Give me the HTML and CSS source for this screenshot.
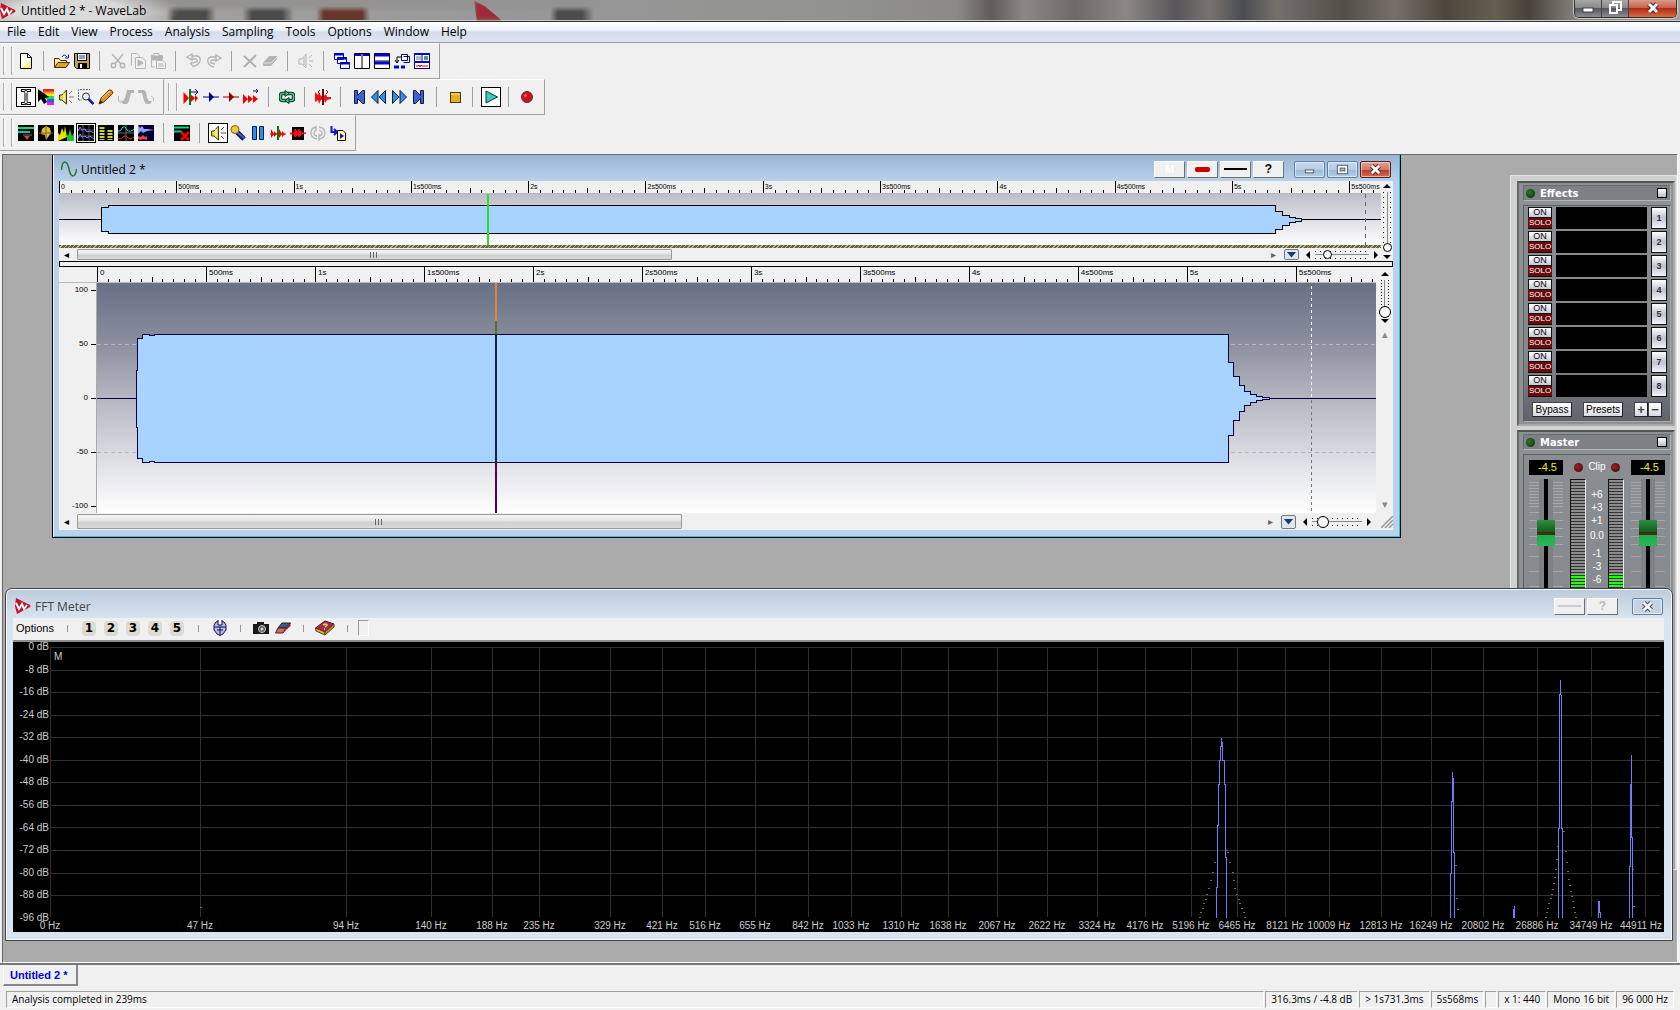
FILE: index.html
```html
<!DOCTYPE html>
<html lang="en">
<head>
    <meta charset="UTF-8">
    <meta name="viewport" content="width=device-width, initial-scale=1.0">
    <title>Untitled 2 * - WaveLab</title>
    <link rel="stylesheet" href="styles.css">
</head>
<body>
    <header class="titlebar">
        <svg class="logo" viewBox="0 0 16 16"><path d="M1 0 L15 7 Q16 8 15 9 L2 16 L0 8 Z" fill="#c4122a"/><path d="M1 5 L4 11 L7 6 L9 11 L12 7" fill="none" stroke="#fff" stroke-width="2"/></svg>
        <h1>Untitled 2 * - WaveLab</h1>
        <div class="controls">
            <button aria-label="Minimize"><svg viewBox="0 0 16 16"><rect x="3" y="8" width="10" height="4" fill="#fff" stroke="#444"/></svg></button>
            <button aria-label="Restore"><svg viewBox="0 0 16 16"><path d="M6 5 V2 H14 V10 H11" fill="none" stroke="#fff" stroke-width="2"/><rect x="3" y="5" width="7" height="8" fill="none" stroke="#fff" stroke-width="2"/></svg></button>
            <button class="close" aria-label="Close"><svg viewBox="0 0 16 16"><path d="M4 4 L12 12 M12 4 L4 12" stroke="#5a2020" stroke-width="5"/><path d="M4 4 L12 12 M12 4 L4 12" stroke="#fff" stroke-width="3"/></svg></button>
        </div>
    </header>

    <nav class="menu">
        <a href="#">File</a>
        <a href="#">Edit</a>
        <a href="#">View</a>
        <a href="#">Process</a>
        <a href="#">Analysis</a>
        <a href="#">Sampling</a>
        <a href="#">Tools</a>
        <a href="#">Options</a>
        <a href="#">Window</a>
        <a href="#">Help</a>
    </nav>

    <!-- Toolbars -->
    <div class="toolrow">
        <div class="toolbar">
            <button class="tool" title="New"><svg viewBox="0 0 16 16"><path d="M2.500 .5 H9.500 L13.500 4.500 V15.500 H2.500 Z" fill="#fffff0" stroke="#000"/><path d="M9.500 .5 V4.500 H13.500" fill="none" stroke="#000"/><path d="M13 7 V15 H4 Z" fill="#f4f080"/></svg></button>
            <i class="sep"></i>
            <button class="tool" title="Open"><svg viewBox="0 0 16 16"><path d="M.5 14.500 V5.500 H5 L6.500 7.500 H12.500 V9" fill="#ffe9a0" stroke="#4a3000"/><path d="M.5 14.500 L4 9.500 H15.500 L12 14.500 Z" fill="#e0a030" stroke="#4a3000"/><path d="M8 4 Q10 0 13 4 M14.500 1.500 V5 H11" fill="none" stroke="#1010c0"/></svg></button>
            <button class="tool" title="Save"><svg viewBox="0 0 16 16"><path d="M.5 .5 H15.500 V15.500 H2.500 L.5 13.500 Z" fill="#c8a050" stroke="#000"/><rect x="3.500" y=".5" width="9" height="7" fill="#fff" stroke="#000"/><path d="M5 3 H11 M5 5 H11" stroke="#2030c0"/><rect x="4" y="10" width="9" height="6"/><rect x="6" y="11" width="2" height="4" fill="#fff"/></svg></button>
            <i class="sep"></i>
            <button class="tool" title="Cut" disabled><svg viewBox="0 0 16 16" fill="none" stroke="#b4b4b4" stroke-width="1.500"><path d="M2 1 L11 11 M13 1 L5 11"/><circle cx="3.500" cy="12.500" r="2.200"/><circle cx="12.500" cy="12.500" r="2.200"/></svg></button>
            <button class="tool" title="Copy" disabled><svg viewBox="0 0 16 16" fill="none" stroke="#b4b4b4"><path d="M1.500 12.500 V.5 H7 L9.500 3 V4"/><path d="M5.500 4.500 H12 L15.500 7.500 V15.500 H5.500 Z"/><path d="M8 7 L13 10 L8 13 Z" fill="#b4b4b4"/></svg></button>
            <button class="tool" title="Paste" disabled><svg viewBox="0 0 16 16" fill="none" stroke="#b4b4b4"><path d="M5 14 H1.500 V2.500 H4 V.5 H9 V2.500 H12.500 V6" /><rect x="2" y="3" width="10" height="4" fill="#b4b4b4"/><path d="M6.500 7.500 H13 L15.500 10 V15.500 H6.500 Z M8 11 H13 M8 13 H14"/></svg></button>
            <i class="sep"></i>
            <button class="tool" title="Undo" disabled><svg viewBox="0 0 16 16" fill="none" stroke="#b4b4b4" stroke-width="1.300"><path d="M1 4 L6 1 V7 Z M6 3 H11 Q15 4 14 8 Q13 12 8 13 M6 6 H10 Q12 7 11 9 L5 10 M4 10 L8 14"/></svg></button>
            <button class="tool" title="Redo" disabled><svg viewBox="0 0 16 16" fill="none" stroke="#b4b4b4" stroke-width="1.300"><path d="M15 5 L10 2 V8 Z M10 4 H5 Q1 5 2 9 Q3 13 8 14 M10 7 H6 Q4 8 5 10 L9 11"/></svg></button>
            <i class="sep"></i>
            <button class="tool" title="Delete" disabled><svg viewBox="0 0 16 16"><path d="M2 3 L14 14 M14 2 L2 14" stroke="#b0b0b0" stroke-width="2"/></svg></button>
            <button class="tool" title="Erase" disabled><svg viewBox="0 0 16 16"><path d="M7 3 H15 V6 L9 13 H1 V10 Z" fill="#b4b4b4"/><path d="M1 10 H9 L15 4" fill="none" stroke="#ddd"/></svg></button>
            <i class="sep"></i>
            <button class="tool" title="Monitor" disabled><svg viewBox="0 0 16 16" fill="none" stroke="#b4b4b4"><path d="M1 6 H4 L8 1 V15 L4 11 H1 Z M6 4 V12 M11 5 L14 2 M11 8 H15 M11 11 L14 14"/></svg></button>
            <i class="sep"></i>
            <button class="tool" title="Cascade"><svg viewBox="0 0 16 16" fill="#fff" stroke="#000080"><path d="M.5 .5 h9 v6 h-9 Z M3.500 4.500 h9 v6 h-9 Z M6.500 9.500 h9 v6 h-9 Z"/><path d="M0 1.500 h10 M3 5.500 h10 M6 10.500 h10" stroke="#0000e0" stroke-width="2"/></svg></button>
            <button class="tool" title="Tile vertically"><svg viewBox="0 0 16 16"><path d="M.5 .5 h15 v15 h-15 Z M8 0 V16" fill="#fff" stroke="#000"/><path d="M1 2 h6 M9 2 h6" stroke="#0000e0" stroke-width="2"/></svg></button>
            <button class="tool" title="Tile horizontally"><svg viewBox="0 0 16 16"><path d="M.5 .5 h15 v15 h-15 Z M0 8 H16" fill="#fff" stroke="#000"/><path d="M1 2 h14 M1 10 h14" stroke="#0000e0" stroke-width="3"/></svg></button>
            <button class="tool" title="Arrange"><svg viewBox="0 0 16 16"><path d="M7.500 1.500 h6 v6 h-6 Z M9.500 3.500 h6 v6 h-6" fill="#fff" stroke="#000080"/><path d="M7 4 H3 V9 M1 7 L3 10 L5 7" fill="none" stroke="#000"/><path d="M0 14 h5 M7 14 h4" stroke="#0000e0" stroke-width="3"/></svg></button>
            <button class="tool" title="Layout"><svg viewBox="0 0 16 16"><rect x=".5" y=".5" width="15" height="15" fill="#fff" stroke="#000080"/><path d="M0 1 h16 M0 9 h16" stroke="#0000e0" stroke-width="2"/><path d="M8 1 V8" stroke="#000080"/><path d="M2 4 h5 M2 6 h5" stroke="#777"/><rect x="10" y="3" width="4" height="4" fill="#4a9a9a"/><path d="M2 13 h2 l1 -1 l1 2 l1 -2 l1 1 h6" fill="none" stroke="#e00"/></svg></button>
        </div>
    </div>
    <div class="toolrow">
        <div class="toolbar">
            <button class="tool on" title="Time selection"><svg viewBox="0 0 16 16"><path d="M3 1.500 H6 Q8 1.500 8 4 Q8 1.500 10 1.500 H13 M3 14.500 H6 Q8 14.500 8 12 Q8 14.500 10 14.500 H13 M8 3 V13" fill="none" stroke="#000" stroke-width="3"/><path d="M4 1.500 H6 Q8 1.500 8 4 Q8 1.500 10 1.500 H12 M4 14.500 H6 Q8 14.500 8 12 Q8 14.500 10 14.500 H12 M8 3 V13" fill="none" stroke="#fff"/></svg></button>
            <button class="tool" title="Spectrum edit"><svg viewBox="0 0 16 16"><path d="M5 1.500 H16" stroke="#f02020" stroke-width="3"/><path d="M5 4 H16" stroke="#f09020" stroke-width="3"/><path d="M6 6 H16" stroke="#f0f020" stroke-width="3"/><path d="M8 8.500 H16" stroke="#20e040" stroke-width="3"/><path d="M9 11.500 H16" stroke="#2060f0" stroke-width="3"/><path d="M9 14.500 H16" stroke="#e020e0" stroke-width="3"/><path d="M0 0 V13 L3 10 L6 15 L9 13 L7 9 L11 8 Z"/></svg></button>
            <button class="tool" title="Play tool"><svg viewBox="0 0 16 16"><path d="M1.500 6 H4 L8.500 1 V15 L4 11 H1.500 Z" fill="#e0d840" stroke="#403800"/><path d="M6 4 V12" stroke="#fff"/><path d="M11 5 L14 2 M11 8 H16 M11 11 L14 14" stroke="#777"/></svg></button>
            <button class="tool" title="Zoom"><svg viewBox="0 0 16 16"><path d="M.5 11 V.5 H12" fill="none" stroke="#666" stroke-dasharray="2 1"/><path d="M.5 11 H4" stroke="#666" stroke-dasharray="2 1"/><circle cx="8" cy="7.500" r="3.500" fill="#e8eef8" stroke="#333"/><path d="M10.500 10 L15.500 15" stroke="#1018c0" stroke-width="2.500"/></svg></button>
            <button class="tool" title="Pencil"><svg viewBox="0 0 16 16"><path d="M1 15 L3 9 L11 1 Q14 0 15 4 L6 13 Z" fill="#e09030" stroke="#6a3800"/><path d="M1 15 L2.500 11 L5 13.500 Z" fill="#402000"/><path d="M4 9 L12 2" stroke="#ffd890"/></svg></button>
            <button class="tool" title="Fade in" disabled><svg viewBox="0 0 16 16"><path d="M2 11 L5 12 L7 9 L9 1 H16 V4 H13 L11 12 L9 15 H5 Z" fill="#b4b4b4"/><path d="M0.500 7 V12 L3 14" fill="none" stroke="#b4b4b4"/></svg></button>
            <button class="tool" title="Fade out" disabled><svg viewBox="0 0 16 16"><path d="M0 1 H6 L8 3 L9 9 L11 12 H14 L12 15 H8 L6 12 L4 4 H0 Z" fill="#b4b4b4"/><path d="M13 7 L15.500 9 V12" fill="none" stroke="#b4b4b4"/></svg></button>
        </div>
        <div class="toolbar">
            <button class="tool" title="Go to cursor"><svg viewBox="0 0 16 16"><path d="M.5 3 V15 L6 9 Z M7 5 V14 L12 9 Z M12 6 V13 L15 9 Z" fill="#f00000"/><path d="M7 0 V16" stroke="#008000" stroke-width="2"/><path d="M8 3 H15 M12 0 L15 3 L12 6" fill="none" stroke="#000090"/></svg></button>
            <button class="tool" title="Marker"><svg viewBox="0 0 16 16"><path d="M0 8 H16" stroke="#000090"/><path d="M6 3 V13 L11 8 Z" fill="#000090"/></svg></button>
            <button class="tool" title="Region marker"><svg viewBox="0 0 16 16"><path d="M0 8 H16" stroke="#900000"/><path d="M6 3 V13 L11 8 Z" fill="#900000"/></svg></button>
            <button class="tool" title="Play all"><svg viewBox="0 0 16 16"><path d="M0 5 V15 L5 10 Z M5 6 V14 L10 10 Z M10 6 V14 L15 10 Z" fill="#f00000"/><path d="M10 2 H15 M13 0 L15 2 L13 4" fill="none" stroke="#000090"/></svg></button>
            <i class="sep"></i>
            <button class="tool" title="Loop"><svg viewBox="0 0 16 16"><rect x="1.500" y="4.500" width="13" height="7" rx="2" fill="none" stroke="#003820" stroke-width="3.500"/><rect x="1.500" y="4.500" width="13" height="7" rx="2" fill="none" stroke="#50c890" stroke-width="1.500"/><path d="M6 1.500 L10 4.500 L6 7.500 Z M10 8.500 L6 11.500 L10 14.500 Z" fill="#50c890" stroke="#003820"/></svg></button>
            <i class="sep"></i>
            <button class="tool" title="Split"><svg viewBox="0 0 16 16"><path d="M0 3 L3 6 L4 3 L6 7 H9 L11 5 L12 8 H16 V10 L12 11 L10 14 L9 10 L6 11 L4 15 L3 11 L0 13 Z" fill="#f01010"/><path d="M8 0 V16" stroke="#800000" stroke-width="2"/><path d="M5 1 L3 3 L5 5 M11 1 L13 3 L11 5" stroke="#333" fill="none"/></svg></button>
            <i class="sep"></i>
            <button class="tool" title="Start"><svg viewBox="0 0 16 16"><path d="M3.500 1.500 H6.500 V6.500 L11.500 1.500 H13.500 V14.500 H11.500 L6.500 9.500 V14.500 H3.500 Z" fill="#3a62d0" stroke="#0a1a50"/></svg></button>
            <button class="tool" title="Rewind"><svg viewBox="0 0 16 16"><path d="M.5 8 L7 1.500 V14.500 Z M8 8 L14.500 1.500 V14.500 Z" fill="#3090e0" stroke="#0a1a50"/></svg></button>
            <button class="tool" title="Forward"><svg viewBox="0 0 16 16"><path d="M1.500 1.500 L8 8 L1.500 14.500 Z M9 1.500 L15.500 8 L9 14.500 Z" fill="#3090e0" stroke="#0a1a50"/></svg></button>
            <button class="tool" title="End"><svg viewBox="0 0 16 16"><path d="M12.500 1.500 H9.500 V6.500 L4.500 1.500 H2.500 V14.500 H4.500 L9.500 9.500 V14.500 H12.500 Z" fill="#3a62d0" stroke="#0a1a50"/></svg></button>
            <i class="sep"></i>
            <button class="tool" title="Stop"><svg viewBox="0 0 16 16"><rect x="3.500" y="3.500" width="10" height="10" fill="#e0b020" stroke="#4a3800"/><path d="M4 5 H13" stroke="#ffe880"/></svg></button>
            <i class="sep"></i>
            <button class="tool on" title="Play"><svg viewBox="0 0 16 16"><path d="M3 2 L14.500 8 L3 14 Z" fill="#40c8b0" stroke="#003838"/></svg></button>
            <i class="sep"></i>
            <button class="tool" title="Record"><svg viewBox="0 0 16 16"><circle cx="8" cy="8" r="5.500" fill="#d01020" stroke="#603030"/><circle cx="6.500" cy="6.500" r="1.500" fill="#f06060"/></svg></button>
        </div>
    </div>
    <div class="toolrow">
        <div class="toolbar">
            <button class="tool" title="Level meter"><svg viewBox="0 0 16 16"><rect width="16" height="16"/><path d="M0 3 H16" stroke="#00e070" stroke-width="2"/><path d="M0 7 H12" stroke="#00c0c0" stroke-width="2"/><path d="M5 10 H14" stroke="#777"/><path d="M6 11 H12 L9 15 Z" fill="#e04030"/></svg></button>
            <button class="tool" title="Phase scope"><svg viewBox="0 0 16 16"><rect width="16" height="16"/><path d="M4 4 L8 1 L12 3 L13 8 L8 15 L7 10 L3 9 Z" fill="#d8c040"/><path d="M1 8 H15 M8 1 V14" stroke="#806020"/></svg></button>
            <button class="tool" title="Spectrum"><svg viewBox="0 0 16 16"><rect width="16" height="16"/><path d="M0 16 V8 L2 10 L4 3 L6 8 L7 1 L9 12 Z" fill="#e8e000"/><path d="M9 16 V9 L10 11 L12 4 L14 11 L16 8 V16 Z" fill="#20c030"/></svg></button>
            <button class="tool on" title="FFT meter"><svg viewBox="0 0 16 16"><rect width="16" height="16"/><path d="M0 5 H16 M0 11 H16 M5 0 V16 M11 0 V16" stroke="#555"/><path d="M0 6 L2 2 L4 5 L7 4 L9 7 L12 6 L16 8 M0 13 L2 9 L4 12 L7 11 L9 13 L12 11 L16 14" fill="none" stroke="#8080ff"/></svg></button>
            <button class="tool" title="Bit meter"><svg viewBox="0 0 16 16"><rect width="16" height="16"/><path d="M4 2 V15" stroke="#d0d030" stroke-width="5" stroke-dasharray="2 1"/><path d="M12 5 V15" stroke="#d0d030" stroke-width="5" stroke-dasharray="2 1"/></svg></button>
            <button class="tool" title="Oscilloscope"><svg viewBox="0 0 16 16"><rect width="16" height="16"/><path d="M0 8 H16 M8 0 V16" stroke="#666"/><path d="M0 6 Q3 7 4 3 Q7 0 9 5 Q12 8 16 4" fill="none" stroke="#20e0e0"/><path d="M0 14 Q4 15 6 11 Q8 10 10 13 Q13 15 16 12" fill="none" stroke="#f02020"/></svg></button>
            <button class="tool" title="Wave scope"><svg viewBox="0 0 16 16"><rect width="16" height="16" fill="#000030"/><path d="M0 0 L2 3 L4 1 L6 4 L10 4 L16 5 L9 6 L5 8 L3 6 L0 9 Z" fill="#90a0ff"/><path d="M0 11 L3 12 L5 10 L7 12 L9 11 V15 L5 14 L3 15 L0 14 Z" fill="#f04040"/></svg></button>
            <i class="sep"></i>
            <button class="tool" title="Close meters"><svg viewBox="0 0 16 16"><rect width="16" height="16"/><path d="M0 2.500 H15" stroke="#00e070" stroke-width="2"/><path d="M0 6.500 H8" stroke="#00c0c0" stroke-width="2"/><path d="M7 7 L15 15 M15 7 L7 15" stroke="#f00000" stroke-width="3"/></svg></button>
            <i class="sep"></i>
            <button class="tool on" title="Monitor playback"><svg viewBox="0 0 16 16"><path d="M1.500 6 H4 L8.500 1 V15 L4 11 H1.500 Z" fill="#e0d840" stroke="#403800"/><path d="M6 4 V12" stroke="#fff"/><path d="M11 5 L14 2 M11 8 H16 M11 11 L14 14" stroke="#555"/></svg></button>
            <button class="tool" title="Monitor input"><svg viewBox="0 0 16 16"><path d="M7 7 L14 14" stroke="#101850" stroke-width="5"/><path d="M7 7 L14 13" stroke="#4060d0" stroke-width="2"/><circle cx="5" cy="4.500" r="4" fill="#f0c840" stroke="#806010"/></svg></button>
            <button class="tool" title="Pause"><svg viewBox="0 0 16 16"><path d="M2.500 1.500 h4 v13 h-4 Z M9.500 1.500 h4 v13 h-4 Z" fill="#3090e0" stroke="#0a1a50"/></svg></button>
            <button class="tool" title="Monitor cursor"><svg viewBox="0 0 16 16"><path d="M1 4 V13 L4 9 Z M4 6 V12 L7 9 Z M9 4 V13 L12 9 Z M12 6 V12 L15 9 Z" fill="#f00000"/><path d="M0 9 H16" stroke="#f00000"/><path d="M8 1 V15" stroke="#008000" stroke-width="2"/></svg></button>
            <button class="tool" title="Analyze selection"><svg viewBox="0 0 16 16"><rect x="2" y="2" width="12" height="13"/><path d="M0 8 L4 8 L5 4 L8 8 L9 4 L12 8 H16 L12 9 L9 12 L8 9 L5 12 L4 9 H0 Z" fill="#f01010" stroke="#f01010"/></svg></button>
            <button class="tool" title="Refresh" disabled><svg viewBox="0 0 16 16" fill="none" stroke="#b4b4b4" stroke-width="1.300"><path d="M6 2 Q1 3 1 8 Q1 13 7 14 M6 5 Q4 6 4 8 Q4 11 7 11 M9 2 Q15 3 15 8 Q15 13 9 14 M9 5 Q12 6 12 8 Q12 11 9 11 M6 1 V6 M9 9 V16"/></svg></button>
            <button class="tool" title="Export"><svg viewBox="0 0 16 16"><path d="M1.500 1 V7 H6 M4 4 L7 7 L4 10" fill="none" stroke="#1010e0" stroke-width="2"/><path d="M7.500 5.500 H13 L15.500 8 V15.500 H7.500 Z" fill="#fff8a0" stroke="#000"/><path d="M10 8 L14 11 L10 14 Z" fill="#1010e0"/></svg></button>
        </div>
    </div>

    <main class="workspace">
        <!-- Mixer column -->
        <aside class="mixer">
            <section class="unit">
                <h2><i class="led green"></i>Effects<button aria-label="Fold effects"></button></h2>
                <div class="unit-body">
                    <div id="slots"></div>
                    <div class="unit-buttons">
                        <button>Bypass</button>
                        <button>Presets</button>
                        <span><button>+</button><button>−</button></span>
                    </div>
                </div>
            </section>
            <section class="unit master">
                <h2><i class="led green"></i>Master<button aria-label="Fold master"></button></h2>
                <div class="unit-body master-body">
                    <div class="channel">
                        <output>-4.5</output>
                        <input class="fader" type="range" value="79" aria-label="Left level">
                    </div>
                    <div class="vu"><i class="led red"></i><div class="bar"></div></div>
                    <div class="scale">
                        <span>Clip</span>
                        <ul><li>+6</li><li>+3</li><li>+1</li><li class="zero">0.0</li><li>-1</li><li>-3</li><li>-6</li></ul>
                    </div>
                    <div class="vu"><i class="led red"></i><div class="bar"></div></div>
                    <div class="channel">
                        <output>-4.5</output>
                        <input class="fader" type="range" value="79" aria-label="Right level">
                    </div>
                </div>
            </section>
        </aside>

        <!-- Wave document -->
        <section class="window doc">
            <div class="window-title">
                <svg class="logo" viewBox="0 0 16 16"><path d="M.5 9 Q1 1 4 1 Q6.500 1 8 8 Q9.500 15 12 15 Q15 14 15.500 8" fill="none" stroke="#2a7a20" stroke-width="1.500"/></svg>
                <h2>Untitled 2 *</h2>
                <button class="flat" aria-label="Marker"><b class="ghost">M</b></button>
                <button class="flat" aria-label="Colour"><i class="pill"></i></button>
                <button class="flat" aria-label="Line"><i class="dash"></i></button>
                <button class="flat help">?</button>
                <button class="glass first" aria-label="Minimize"><svg viewBox="0 0 16 16"><rect x="3.500" y="8.500" width="9" height="3" fill="#fff" stroke="#555"/></svg></button>
                <button class="glass" aria-label="Maximize"><svg viewBox="0 0 16 16"><rect x="4" y="5" width="8" height="6" fill="none" stroke="#456" stroke-width="4"/><rect x="4" y="5" width="8" height="6" fill="none" stroke="#fff" stroke-width="2"/></svg></button>
                <button class="glass close" aria-label="Close"><svg viewBox="0 0 16 16"><path d="M4 4 L12 12 M12 4 L4 12" stroke="#5a2020" stroke-width="5"/><path d="M4 4 L12 12 M12 4 L4 12" stroke="#fff" stroke-width="3"/></svg></button>
            </div>
            <div class="overview">
                <div class="overview-main">
                    <div class="ruler small" id="ruler-top"></div>
                    <svg class="wave" viewBox="0 0 1322 51" preserveAspectRatio="none" shape-rendering="crispEdges">
                        <defs><linearGradient id="g1" x1="0" y1="0" x2="0" y2="1"><stop offset="0" stop-color="#bcbeca"/><stop offset="1" stop-color="#fff"/></linearGradient></defs>
                        <rect width="1322" height="51" fill="url(#g1)"/>
                        <path d="M0 25.500 H42.500 V13.500 H49 V11.500 H1216.500 V17 H1223 V21 H1230 V23 H1236 V24.500 H1242 V25.500 H1322 M1242 25.500 V27 H1236 V28.500 H1230 V31 H1223 V35 H1216.500 V39.500 H49 V37.500 H42.500 V25.500" fill="#a8d2ff" stroke="#000"/>
                        <path d="M1306.500 0 V51" stroke="#667" stroke-dasharray="4 4"/>
                        <path d="M429 0 V51" stroke="#30d830" stroke-width="2"/>
                    </svg>
                    <div class="hatch"></div>
                    <div class="hscroll thin">
                        <button class="arrow" aria-label="Scroll left">◂</button>
                        <div class="track"><div class="thumb"></div></div>
                        <button class="arrow gray" aria-label="Scroll right">▸</button>
                        <button class="drop" aria-label="Zoom menu"></button>
                        <div class="hzoom"><i class="left"></i><input type="range" value="18" aria-label="Overview zoom"><i class="right"></i></div>
                    </div>
                </div>
                <div class="vzoom"><i class="up"></i><input type="range" value="0" aria-label="Overview vertical zoom"><i class="down"></i></div>
            </div>
            <div class="splitter"></div>
            <div class="main-view">
                <div class="ruler-pad"></div>
                <div class="ruler" id="ruler-main"></div>
                <div class="side">
                    <div class="vzoom"><i class="up"></i><input type="range" value="0" aria-label="Vertical zoom"><i class="down"></i></div>
                    <div class="vscroll"><button aria-label="Scroll up">▴</button><button aria-label="Scroll down">▾</button></div>
                </div>
                <ul class="level-axis"><li>100</li><li>50</li><li>0</li><li>-50</li><li>-100</li></ul>
                <svg class="wave" viewBox="0 0 1279 230" preserveAspectRatio="none" shape-rendering="crispEdges">
                    <defs><linearGradient id="g2" x1="0" y1="0" x2="0" y2="1"><stop offset="0" stop-color="#687085"/><stop offset=".25" stop-color="#898d9d"/><stop offset=".5" stop-color="#b4b7c1"/><stop offset=".8" stop-color="#e2e3e9"/><stop offset="1" stop-color="#fff"/></linearGradient></defs>
                    <rect width="1279" height="230" fill="url(#g2)"/>
                    <path d="M0 61.500 H1279 M0 169.500 H1279" stroke="#b8b8b8" stroke-dasharray="4 3"/>
                    <path d="M0 115.500 H39.500 V87 H40.500 V55.500 H45.500 V51.500 H52 V52.500 H57 V51.500 H1131.500 V79 H1136.500 V93.500 H1142.500 V102.500 H1147.500 V108.500 H1153.500 V111.500 H1159.500 V113.500 H1165.500 V114.500 H1172 V115.500 H1279 M1172 115.500 V116.500 H1165.500 V117.500 H1159.500 V119.500 H1153.500 V122.500 H1147.500 V128.500 H1142.500 V137.500 H1136.500 V152 H1131.500 V179.500 H57 V178.500 H52 V179.500 H45.500 V175.500 H40.500 V144 H39.500 V115.500" fill="#a8d2ff" stroke="#000040"/>
                    <path d="M1214.500 3 V115" stroke="#fff" stroke-dasharray="3 3"/>
                    <path d="M1214.500 117 V230" stroke="#777" stroke-dasharray="3 3"/>
                    <path d="M399 0 V38" stroke="#d88a38" stroke-width="2"/>
                    <path d="M399 38 V51" stroke="#4a7828" stroke-width="2"/>
                    <path d="M399 51 V180" stroke="#12283c" stroke-width="2"/>
                    <path d="M399 180 V230" stroke="#4c0848" stroke-width="2"/>
                </svg>
            </div>
            <div class="hscroll">
                <button class="arrow" aria-label="Scroll left">◂</button>
                <div class="track"><div class="thumb"></div></div>
                <button class="arrow gray" aria-label="Scroll right">▸</button>
                <button class="drop" aria-label="Zoom menu"></button>
                <div class="hzoom"><i class="left"></i><input type="range" value="14" aria-label="Zoom"><i class="right"></i></div>
                <svg class="grip" viewBox="0 0 12 12"><path d="M0 12 L12 0 M4 12 L12 4 M8 12 L12 8" stroke="#999" stroke-width="1.500"/></svg>
            </div>
        </section>

        <!-- FFT meter -->
        <section class="window fft">
            <div class="window-title">
                <svg class="logo" viewBox="0 0 16 16"><path d="M1 0 L15 7 Q16 8 15 9 L2 16 L0 8 Z" fill="#c4122a"/><path d="M1 5 L4 11 L7 6 L9 11 L12 7" fill="none" stroke="#fff" stroke-width="2"/></svg>
                <h2>FFT Meter</h2>
                <button class="flat" aria-label="Line"><i class="dash"></i></button>
                <button class="flat help">?</button>
                <button class="glass first" aria-label="Close"><svg viewBox="0 0 16 16"><path d="M4 4 L12 12 M12 4 L4 12" stroke="#445" stroke-width="5"/><path d="M4 4 L12 12 M12 4 L4 12" stroke="#fff" stroke-width="3"/></svg></button>
            </div>
            <div class="fft-tools">
                <button class="options">Options</button>
                <i class="tick"></i>
                <button class="num">1</button><button class="num">2</button><button class="num">3</button><button class="num">4</button><button class="num">5</button>
                <i class="tick"></i>
                <button class="tool" title="Settings"><svg viewBox="0 0 16 16"><path d="M4 2 L2 5 V10 L5 14 L8 15.500 L11 14 L14 10 V5 L12 2 L8 .5 Z" fill="#b8b8f0" stroke="#101040"/><path d="M6 0 V5 H10 V0" fill="#f0f0f0" stroke="#101040"/><path d="M2 7 H14 M5 10 H11 M8 7 V15" stroke="#101040"/></svg></button>
                <i class="tick"></i>
                <button class="tool" title="Snapshot"><svg viewBox="0 0 16 16"><path d="M0 4 H4 V2 H11 V4 H16 V14 H0 Z" fill="#181818"/><circle cx="9" cy="9" r="3.500" fill="#555" stroke="#ccc"/><circle cx="9" cy="9" r="1.500" fill="#ddd"/></svg></button>
                <button class="tool" title="Erase snapshots"><svg viewBox="0 0 16 16"><path d="M7 3 H15.500 L11 8 H3 Z" fill="#3a5a90" stroke="#222"/><path d="M3 8 H11 L8 13 H.5 Z" fill="#d86868" stroke="#402020"/><path d="M11 8 L15.500 3 V6 L8 13 Z" fill="#803030"/></svg></button>
                <i class="tick"></i>
                <button class="tool wide" title="Help"><svg viewBox="0 0 20 16"><path d="M.5 8 L10 1 L19 4 L10 12 Z" fill="#a82850" stroke="#501028"/><path d="M.5 8 L10 12 V15 L1 11 Z" fill="#e0b040" stroke="#604010"/><path d="M10 12 L19 4 V7 L10 15 Z" fill="#c09030" stroke="#604010"/><path d="M8 5 Q11 3 12 5 L10 7 M9 9 h1" stroke="#f0e040" stroke-width="1.500" fill="none"/></svg></button>
                <i class="tick"></i>
                <i class="well"></i>
            </div>
            <div class="fft-plot">
                <svg id="spectrum" viewBox="0 0 1651 290" preserveAspectRatio="none" shape-rendering="crispEdges"></svg>
                <ul class="db-axis" id="db-axis"></ul>
                <span class="mode">M</span>
                <div class="hz-axis" id="hz-axis"></div>
            </div>
        </section>
    </main>

    <div class="tabs"><button>Untitled 2 *</button></div>

    <footer class="status">
        <span class="message">Analysis completed in 239ms</span>
        <span>316.3ms / -4.8 dB</span>
        <span>&gt; 1s731.3ms</span>
        <span>5s568ms</span>
        <span class="empty"></span>
        <span>x 1: 440</span>
        <span>Mono 16 bit</span>
        <span>96 000 Hz</span>
    </footer>

    <script src="app.js"></script>
</body>
</html>
```
FILE: styles.css
```css
* {
    box-sizing: border-box;
}

body {
    margin: 0;
    height: 100vh;
    display: flex;
    flex-direction: column;
    background: #f0f0f0;
    color: #000;
    font-family: "Liberation Sans", Arial, sans-serif;
    font-size: 11px;
    overflow: hidden;
}

button, input {
    margin: 0;
    padding: 0;
    border: none;
    background: none;
    font: inherit;
    color: inherit;
}

h1, h2, ul {
    margin: 0;
    padding: 0;
    list-style: none;
    font-weight: normal;
}

svg {
    display: block;
}

.logo {
    width: 16px;
    height: 16px;
}

/* Title bar */
.titlebar {
    flex: none;
    height: 22px;
    display: flex;
    align-items: center;
    gap: 5px;
    border-bottom: 1px solid #333;
    box-shadow: inset 0 -1px #c8c8c8;
    background:
        radial-gradient(ellipse 110px 26px at 70px 12px, rgba(225, 225, 225, 0.9) 50%, transparent),
        linear-gradient(#959391 6px, transparent 12px),
        linear-gradient(90deg, transparent 166px, #4c4d48 174px 206px, transparent 216px 242px, #4a4a4a 252px 282px, transparent 294px 316px, #66362a 324px 362px, transparent 370px 550px, #4c4c4c 558px 582px, transparent 594px),
        linear-gradient(90deg, #a8a6a2 0, #98989a 30%, #92928f 50%, #8a8987 57%, #605d58 59%, #8b8884 61%, #6e6a67 64%, #8a8784 67%, #58565a 70%, #77736f 72%, #4a4c50 74%, #74706c 76%, #544e48 80%, #77706a 83%, #4c463c 86%, #655f50 89%, #474139 91%, #8b8781 94%, #a5a19d 100%);
    background-size: auto, 600px 100%, 620px 100%, auto;
    background-repeat: no-repeat;
}

/* blurred red logo that shows through the glass */
.titlebar::after {
    content: "";
    order: 1;
    width: 28px;
    height: 20px;
    margin-right: auto;
    background: #9c2c3a;
    clip-path: polygon(0 0, 40% 30%, 100% 100%, 10% 100%);
    filter: blur(2px);
}

.titlebar h1 {
    width: 448px;
    font: 12px "Open Sans", sans-serif;
}

.controls {
    order: 2;
    display: flex;
    align-self: flex-start;
    height: 18px;
    margin-right: 3px;
    border: 1px solid #333;
    border-top: none;
    border-radius: 0 0 5px 5px;
    box-shadow: 0 0 0 1px rgba(255, 255, 255, 0.5);
    overflow: hidden;
}

.controls button {
    width: 27px;
    display: flex;
    justify-content: center;
    border-right: 1px solid #444;
    background: linear-gradient(#a8a8a8, #888 45%, #55585c 50%, #8a8c90);
}

.controls svg {
    width: 16px;
    height: 16px;
}

.controls .close {
    width: 47px;
    border: none;
    background: linear-gradient(#dc9a8c, #c8604c 45%, #b02c14 50%, #d86a40);
}

/* Menu */
.menu {
    flex: none;
    height: 21px;
    display: flex;
    align-items: center;
    padding: 0 1px 1px;
    border-bottom: 1px solid #9a9aa4;
    background: linear-gradient(#fff, #f0f3fa 40%, #d6dcee 50%, #e0e4f2);
    font: 12px "Open Sans", sans-serif;
}

.menu a {
    padding: 0 6px;
    color: #000;
    text-decoration: none;
}

/* Toolbars */
.toolrow {
    flex: none;
    display: flex;
    gap: 1px;
}

.toolbar {
    height: 36px;
    display: flex;
    align-items: center;
    padding-right: 7px;
    border-top: 1px solid #fff;
    border-right: 1px solid #a0a0a0;
    border-bottom: 1px solid #a0a0a0;
}

.toolbar::before {
    content: "";
    width: 7px;
    height: 28px;
    margin: 0 4px 0 3px;
    border: solid #a8a8a8;
    border-width: 0 1px;
    box-shadow: inset 1px 0 #fff, 1px 0 #fff;
}

.sep {
    width: 16px;
    height: 20px;
    background: linear-gradient(#a0a0a0, #a0a0a0) 7px 0 / 1px 100% no-repeat;
}

.tool {
    width: 20px;
    height: 20px;
    padding: 2px;
}

.tool.on {
    padding: 1px;
    border: 1px solid #000;
    background: #fff;
}

.tool svg {
    width: 16px;
    height: 16px;
}

.tool.wide {
    width: 23px;
    padding: 2px 1px;
}

.tool.wide svg {
    width: 20px;
}

/* MDI area */
.workspace {
    flex: 1;
    position: relative;
    margin: 3px 2px 0;
    border: 1px solid #696969;
    border-bottom-color: #fff;
    border-right-color: #fff;
    background: #ababab;
    overflow: hidden;
}

.window {
    position: absolute;
    display: flex;
    flex-direction: column;
}

.window-title {
    flex: none;
    display: flex;
    align-items: center;
    gap: 2px;
}

.window-title h2 {
    flex: 1;
    margin-left: 2px;
    font: 12px "Open Sans", sans-serif;
}

.flat {
    width: 31px;
    height: 17px;
    display: flex;
    align-items: center;
    justify-content: center;
    border: 1px solid;
    border-color: #fff #707070 #707070 #fff;
    background: #f0f0f0;
}

.ghost {
    color: #fff;
}

.pill {
    width: 15px;
    height: 5px;
    border-radius: 2px;
    background: #c80000;
}

.dash {
    width: 23px;
    height: 2px;
    background: #000;
}

.help {
    font-size: 12px;
    font-weight: bold;
}

.glass {
    width: 31px;
    height: 17px;
    display: flex;
    align-items: center;
    justify-content: center;
    border: 1px solid #5f7fa5;
    border-radius: 2px;
    box-shadow: inset 0 0 0 1px rgba(255, 255, 255, 0.5);
    background: linear-gradient(#c6daef, #b4cce6 50%, #9bb9d8 52%, #b4cfe8);
}

.glass.first {
    margin-left: 8px;
}

.glass svg {
    width: 15px;
    height: 15px;
}

.glass.close {
    border-color: #5a1c18;
    background: linear-gradient(#e0a090, #d07868 50%, #b83c28 52%, #d06c54);
}

/* Wave document */
.doc {
    top: 0;
    left: 49px;
    right: 276px;
    padding: 0 7px 7px 6px;
    border: 1px solid #000;
    border-top: none;
    box-shadow: inset 1px 0 #e8f4ff, inset -1px -1px #20c8e8;
    background: linear-gradient(#9ab5d4, #b9d1ea 26px);
}

.doc .window-title {
    height: 26px;
    padding: 2px 2px 0;
}

.overview, .hscroll, .main-view {
    background: #f0f0f0;
}

.overview {
    display: flex;
}

.overview-main {
    flex: 1;
    min-width: 0;
}

.ruler {
    position: relative;
    height: 16px;
    display: flex;
    overflow: hidden;
    border-bottom: 1px solid #bbb;
    font-size: 8px;
    line-height: 11px;
}

.ruler.small {
    height: 13px;
    font-size: 7px;
}

.ruler span {
    flex: none;
    padding-left: 2px;
    border-left: 1px solid #000;
}

.ruler.small span {
    padding-left: 1px;
}

.ruler svg {
    position: absolute;
    inset: 0;
    width: 100%;
    height: 100%;
}

.wave {
    width: 100%;
}

.overview .wave {
    height: 51px;
}

.hatch {
    height: 3px;
    background: repeating-linear-gradient(135deg, #66663a 0 2px, #b8b88c 2px 3px);
}

.vzoom {
    width: 12px;
    display: flex;
    flex-direction: column;
    align-items: center;
    justify-content: space-between;
    padding: 3px 0 2px;
}

.up, .down, .left, .right {
    width: 0;
    height: 0;
    border: 4px solid transparent;
}

.up {
    border-top: none;
    border-bottom-color: #000;
}

.down {
    border-bottom: none;
    border-top-color: #000;
}

.left {
    border-left: none;
    border-right-color: #000;
}

.right {
    border-right: none;
    border-left-color: #000;
}

input[type="range"] {
    appearance: none;
    -webkit-appearance: none;
}

.vzoom input {
    writing-mode: vertical-lr;
    direction: rtl;
    flex: 1;
    min-height: 0;
    width: 12px;
    margin: 4px 0 3px;
    background:
        linear-gradient(#888, #888) center / 1px 100% no-repeat,
        repeating-linear-gradient(#000 0 1px, transparent 1px 3px) 2px 0 / 1px 100% no-repeat,
        repeating-linear-gradient(#000 0 1px, transparent 1px 3px) 9px 0 / 1px 100% no-repeat;
}

.overview .vzoom input {
    background:
        linear-gradient(#888, #888) center / 1px 100% no-repeat,
        repeating-linear-gradient(#000 0 1px, transparent 1px 5px) 2px 0 / 1px 100% no-repeat,
        repeating-linear-gradient(#000 0 1px, transparent 1px 5px) 9px 0 / 1px 100% no-repeat;
}

.vzoom input::-webkit-slider-thumb, .hzoom input::-webkit-slider-thumb {
    -webkit-appearance: none;
    width: 12px;
    height: 12px;
    border: 1px solid #000;
    border-radius: 50%;
    background: #f8f8f8;
}

.overview input::-webkit-slider-thumb {
    width: 9px;
    height: 9px;
}

.hzoom {
    display: flex;
    align-items: center;
    gap: 5px;
}

.hzoom input {
    width: 50px;
    height: 12px;
    background:
        linear-gradient(#888, #888) center / 100% 1px no-repeat,
        repeating-linear-gradient(90deg, #000 0 1px, transparent 1px 5px) 0 2px / 100% 1px no-repeat,
        repeating-linear-gradient(90deg, #000 0 1px, transparent 1px 5px) 0 9px / 100% 1px no-repeat;
}

.hscroll {
    height: 17px;
    display: flex;
    align-items: center;
}

.hscroll.thin {
    height: 13px;
    padding-right: 3px;
}

.hscroll .arrow {
    width: 18px;
    padding-left: 5px;
    font-size: 10px;
    line-height: 10px;
    text-align: left;
}

.hscroll .gray {
    color: #666;
}

.track {
    flex: 1;
}

.thumb {
    width: 51%;
    height: 15px;
    border: 1px solid #999;
    border-radius: 1px;
    background:
        repeating-linear-gradient(90deg, #666 0 1px, transparent 1px 3px) center / 9px 6px no-repeat,
        linear-gradient(#f4f4f4, #e4e4e4 48%, #cfcfcf 52%, #dadada);
}

.thin .thumb {
    width: 50%;
    height: 11px;
}

.thin .hzoom input {
    width: 54px;
}

.drop {
    width: 15px;
    height: 14px;
    margin-right: 7px;
    border: 1px solid #777;
    border-radius: 2px;
    background: #dce6f0;
}

.thin .drop {
    height: 11px;
}

.drop::before {
    content: "";
    display: block;
    width: 10px;
    height: 6px;
    margin: 0 auto;
    background: #1a3c6c;
    clip-path: polygon(0 0, 100% 0, 50% 100%);
}

.grip {
    width: 12px;
    height: 12px;
    margin-left: 10px;
}

.splitter {
    height: 6px;
    border: 1px solid #000;
    background: #f0f0f0;
}

.main-view {
    display: grid;
    grid-template-columns: 38px minmax(0, 1fr) 17px;
    grid-template-rows: 16px 230px;
}

.ruler-pad {
    border-bottom: 1px solid #bbb;
}

.main-view .wave {
    height: 230px;
}

.side {
    grid-column: 3;
    grid-row: 1 / 3;
    display: flex;
    flex-direction: column;
}

.side .vzoom {
    width: 17px;
    height: 57px;
    padding: 5px 0 1px;
}

.side .vzoom input {
    margin-bottom: 1px;
}

.vscroll {
    flex: 1;
    display: flex;
    flex-direction: column;
    justify-content: space-between;
    padding: 4px 0 3px;
    color: #888;
}

.vscroll button {
    line-height: 12px;
}

.level-axis {
    display: flex;
    flex-direction: column;
    justify-content: space-between;
    padding: 2px 0;
    border-right: 1px solid #aaa;
    font-size: 8px;
    line-height: 10px;
}

.level-axis li {
    display: flex;
    align-items: center;
    justify-content: flex-end;
    gap: 3px;
}

.level-axis li::after {
    content: "";
    width: 5px;
    height: 1px;
    background: #000;
}

/* Mixer */
.mixer {
    position: absolute;
    top: 20px;
    right: 0;
    bottom: 92px;
    width: 167px;
    display: flex;
    flex-direction: column;
    gap: 4px;
    padding: 5px 1px 0 6px;
    border: 1px solid #e4e4e4;
    background: #cfd1d1;
}

.unit {
    padding: 2px 2px 2px 4px;
    border: 2px solid #5c5f62;
    border-color: #555 #aaa #aaa #666;
    background: #8e9194;
}

.unit h2 {
    height: 16px;
    display: flex;
    align-items: center;
    gap: 5px;
    padding: 0 3px 0 2px;
    border: 1px solid;
    border-color: #686b70 #b4b4b4 #b4b4b4 #686b70;
    background: #7d8186;
    color: #fff;
    font: bold 10px "DejaVu Sans", sans-serif;
}

.unit h2 button {
    width: 10px;
    height: 10px;
    margin-left: auto;
    border: 1px solid #000;
    background: linear-gradient(#fff, #b8bcc8);
}

.led {
    width: 9px;
    height: 9px;
    border-radius: 50%;
}

.green {
    background: radial-gradient(circle at 40% 40%, #2a7a20, #0a2a08);
}

.red {
    background: radial-gradient(circle at 40% 40%, #a02020, #380808);
}

.unit-body {
    margin-top: 4px;
    padding: 1px 3px 4px 4px;
    border: 1px solid;
    border-color: #5c5f62 #aaa #aaa #5c5f62;
    background: linear-gradient(#8a8e92, #84888c 70%, #5f636a);
}

.slot {
    height: 22px;
    display: grid;
    grid-template-columns: 24px 1fr 16px;
    column-gap: 4px;
    margin-bottom: 2px;
}

.slot .switches {
    display: flex;
    flex-direction: column;
    gap: 1px;
    padding: 1px;
    background: #111;
    font-size: 9px;
}

.slot .switches button {
    height: 9px;
    line-height: 9px;
    background: linear-gradient(#fff, #c4c8d4);
}

.slot .switches .solo {
    height: 10px;
    margin: 0 -1px;
    background: #6a0a0a;
    color: #fff;
    font-size: 8px;
    line-height: 10px;
}

.slot .name {
    background: #000;
}

.slot .number {
    border: 1px solid #111;
    background: linear-gradient(#fff, #c0c4d2 50%, #f4f4f8);
    color: #333;
    font-size: 9px;
    font-weight: bold;
}

.unit-buttons {
    display: flex;
    justify-content: space-between;
    margin: 5px 5px 0 4px;
}

.unit-buttons span {
    display: flex;
}

.unit-buttons button {
    width: 40px;
    height: 15px;
    border: 1px solid;
    border-color: #444 #222 #222 #444;
    background: linear-gradient(#fff, #d8dae0);
    font-size: 10px;
    line-height: 12px;
}

.unit-buttons span button {
    width: 14px;
    font-size: 13px;
    font-weight: bold;
    color: #444;
}

.master {
    flex: 1;
    display: flex;
    flex-direction: column;
}

.master-body {
    flex: 1;
    display: flex;
    justify-content: space-between;
    padding: 5px 5px 0;
}

.channel {
    width: 34px;
    display: flex;
    flex-direction: column;
    align-items: center;
    gap: 4px;
}

.channel output {
    width: 100%;
    height: 15px;
    padding-right: 6px;
    background: #000;
    color: #f0f000;
    font-size: 11px;
    line-height: 15px;
    text-align: right;
}

.fader {
    writing-mode: vertical-lr;
    direction: rtl;
    width: 34px;
    height: 220px;
    background:
        linear-gradient(#000, #000) center / 4px 100% no-repeat,
        linear-gradient(90deg, transparent 10px, #7d8185 10px 24px, transparent 24px),
        repeating-linear-gradient(#a4a8ac 0 1px, transparent 1px 3px) 0 3px / 100% 26px no-repeat,
        repeating-linear-gradient(#a4a8ac 0 1px, transparent 1px 8px) 0 33px / 100% 33px no-repeat,
        repeating-linear-gradient(#a4a8ac 0 1px, transparent 1px 15px) 0 77px / 100% 140px no-repeat;
}

.fader::-webkit-slider-thumb {
    -webkit-appearance: none;
    width: 18px;
    height: 26px;
    background: linear-gradient(#2c9040, #145c20 12px, #403010 12px 15px, #1cac4c 15px, #28b858);
}

.vu {
    width: 16px;
    display: flex;
    flex-direction: column;
    align-items: center;
    gap: 7px;
    padding-top: 3px;
}

.bar {
    width: 100%;
    height: 200px;
    border: 1px solid;
    border-color: #111 #eee #eee #111;
    background:
        repeating-linear-gradient(transparent 0 2px, #333 2px 3px),
        linear-gradient(#8c8c8c 94px, #30f020 94px);
}

.scale {
    margin: 0 -5px;
    padding-top: 1px;
    color: #fff;
    font-size: 10px;
    line-height: 12px;
    text-align: center;
}

.scale ul {
    padding-top: 16px;
}

.scale li {
    margin-bottom: 1px;
}

.scale .zero {
    padding: 2px 0 5px;
}

/* FFT meter */
.fft {
    top: 433px;
    left: 2px;
    right: 4px;
    bottom: 21px;
    padding: 0 8px 8px 7px;
    border: 1px solid #444;
    border-radius: 7px 7px 0 0;
    box-shadow: inset 0 0 0 1px #f4f8fc;
    background: linear-gradient(#bccbdb, #d8e4f1 30px);
}

.fft .window-title {
    height: 29px;
    padding: 5px 1px 0 2px;
}

.fft .window-title h2 {
    color: #444;
}

.fft .flat {
    color: #bbb;
}

.fft .dash {
    background: #ccc;
}

.fft .glass.first {
    margin-left: 12px;
    background: #c4d3e4;
}

.fft-tools {
    flex: none;
    height: 24px;
    display: flex;
    align-items: center;
    gap: 2px;
    padding: 0 3px 2px;
    border-bottom: 2px solid #8c8c8c;
    background: #f0f0f0;
}

.tick {
    width: 1px;
    height: 7px;
    margin: 0 9px;
    background: #999;
}

.options + .tick {
    margin-left: 11px;
}

.tool + .tick {
    margin: 0 8px;
}

.num {
    width: 14px;
    height: 15px;
    margin: 0 3px;
    border-radius: 4px;
    background: #dcdcd0;
    font: bold 12px "DejaVu Sans", sans-serif;
    line-height: 15px;
}

.well {
    width: 11px;
    height: 16px;
    border: 1px solid;
    border-color: #999 #fff #fff #999;
}

.fft-plot {
    flex: 1;
    min-height: 0;
    position: relative;
    background: #000;
    color: #ccc;
    font-size: 10px;
    line-height: 10px;
}

.fft-plot svg {
    width: 100%;
    height: 100%;
}

.db-axis {
    position: absolute;
    top: 0;
    bottom: 9px;
    left: 0;
    width: 36px;
    display: flex;
    flex-direction: column;
    justify-content: space-between;
    text-align: right;
}

.mode {
    position: absolute;
    top: 10px;
    left: 41px;
}

.hz-axis {
    position: absolute;
    left: 0;
    right: 0;
    bottom: 0;
    height: 11px;
}

.hz-axis span {
    position: absolute;
    transform: translateX(-50%);
    white-space: nowrap;
}

/* Bottom bars */
.tabs {
    flex: none;
    height: 25px;
    border-top: 2px solid #777;
    padding-left: 3px;
}

.tabs button {
    height: 21px;
    padding: 0 9px 0 6px;
    border: 1px solid #888;
    border-top: none;
    border-left-color: #fff;
    border-width: 0 2px 2px 1px;
    background: #f0f0f0;
    color: #0000e8;
    font-weight: bold;
}

.status {
    flex: none;
    display: flex;
    gap: 1px;
    height: 22px;
    padding: 3px 6px 2px;
    font: 10px "Open Sans", sans-serif;
}

.status span {
    padding: 0 5px;
    border: 1px solid;
    border-color: #a0a0a0 #fff #fff #a0a0a0;
    line-height: 15px;
    white-space: nowrap;
}

.status .message {
    flex: 1;
}
```
FILE: app.js
```js
// Time rulers: one labelled cell per 500 ms, minor ticks every 50 ms
function drawRuler(id, total, step) {
    const ruler = document.getElementById(id);
    const height = ruler.clientHeight;
    let cells = '';
    for (let i = 0; i * step < total; i++) {
        const s = Math.floor(i / 2);
        const label = i === 0 ? '0' : (s ? s + 's' : '') + (i % 2 ? '500ms' : '');
        cells += `<span style="width:${100 * step / total}%">${label}</span>`;
    }
    let ticks = '';
    for (let i = 0; i * step / 10 < total; i++) {
        if (i % 10 === 0) continue;
        const x = Math.round(i * step / 10) + 0.5;
        ticks += `M${x} ${height - (i % 5 === 0 ? 5 : 3)}V${height}`;
    }
    ruler.innerHTML = cells +
        `<svg viewBox="0 0 ${total} ${height}" preserveAspectRatio="none" shape-rendering="crispEdges"><path d="${ticks}" stroke="#000"/></svg>`;
}

drawRuler('ruler-top', 1322, 117.3);
drawRuler('ruler-main', 1279, 109);

// Effect slots
let slots = '';
for (let i = 1; i <= 8; i++) {
    slots += `<div class="slot"><div class="switches"><button>ON</button><button class="solo">SOLO</button></div>` +
        `<div class="name"></div><button class="number">${i}</button></div>`;
}
document.getElementById('slots').innerHTML = slots;

// Spectrum grid
const width = 1651;
const freqs = [
    [37, '0 Hz'], [187, '47 Hz'], [333, '94 Hz'], [418, '140 Hz'], [479, '188 Hz'], [526, '235 Hz'],
    [597, '329 Hz'], [649, '421 Hz'], [692, '516 Hz'], [742, '655 Hz'], [795, '842 Hz'], [838, '1033 Hz'],
    [888, '1310 Hz'], [935, '1638 Hz'], [984, '2067 Hz'], [1034, '2622 Hz'], [1084, '3324 Hz'],
    [1132, '4176 Hz'], [1178, '5196 Hz'], [1224, '6465 Hz'], [1272, '8121 Hz'], [1316, '10009 Hz'],
    [1368, '12813 Hz'], [1418, '16249 Hz'], [1470, '20802 Hz'], [1524, '26886 Hz'], [1578, '34749 Hz'],
    [1632, '44911 Hz']
];

let grid = '';
let hz = '';
freqs.forEach(([x, label]) => {
    grid += `M${x + 0.5} 5V275`;
    // keep the last label inside the plot
    hz += `<span style="left:${100 * Math.min(x, width - 23) / width}%">${label}</span>`;
});

let db = '';
for (let i = 0; i <= 12; i++) {
    if (i < 12) grid += `M37 ${Math.round(5 + i * 22.55) + 0.5}H1647`;
    db += `<li>${-8 * i} dB</li>`;
}

// Signal peaks
const peaks = [
    'M1203.500 276V245H1204.500V183H1205.500V142H1206.500V118H1207.500V104H1208.500V96L1209.500 104V118H1211.500V142H1212.500V215H1213.500V276',
    'M1437.500 276V231H1438.500V159H1439.500V130L1440.500 142V210H1441.500V276',
    'M1500.500 276V271L1501.500 264V276',
    'M1545.500 276V186H1546.500V67L1547.500 38L1548.500 67V186H1549.500V276',
    'M1585.500 276V259H1586.500V270H1587.500V276',
    'M1616.500 276V224H1617.500V142H1618.500V113V195H1619.500V276'
];

// Peak hold dots
const dots = [
    [1214, 210], [1213, 208], [1216, 220], [1219, 230], [1220, 238], [1221, 246], [1223, 252], [1225, 257], [1226, 261], [1228, 266], [1230, 270], [1231, 275],
    [1201, 220], [1199, 230], [1197, 238], [1195, 246], [1193, 252], [1192, 257], [1190, 261], [1189, 266], [1187, 270], [1186, 275],
    [1550, 189], [1552, 209], [1553, 220], [1554, 229], [1555, 237], [1556, 243], [1557, 249], [1558, 254], [1559, 259], [1560, 265], [1561, 270], [1562, 275],
    [1544, 204], [1543, 217], [1542, 227], [1541, 235], [1540, 241], [1539, 247], [1538, 252], [1537, 256], [1535, 261], [1534, 266], [1533, 270], [1532, 275],
    [1442, 223], [1443, 256], [1444, 267], [1619, 227], [1620, 264], [187, 265]
];

document.getElementById('spectrum').innerHTML =
    `<path d="${grid}" stroke="#303030" fill="none"/>` +
    dots.map(([x, y]) => `<rect x="${x}" y="${y}" width="2" height="1" fill="#8a5c50"/>`).join('') +
    `<path d="${peaks.join('')}" stroke="#7878f8" fill="none"/>`;
document.getElementById('hz-axis').innerHTML = hz;
document.getElementById('db-axis').innerHTML = db;
```
